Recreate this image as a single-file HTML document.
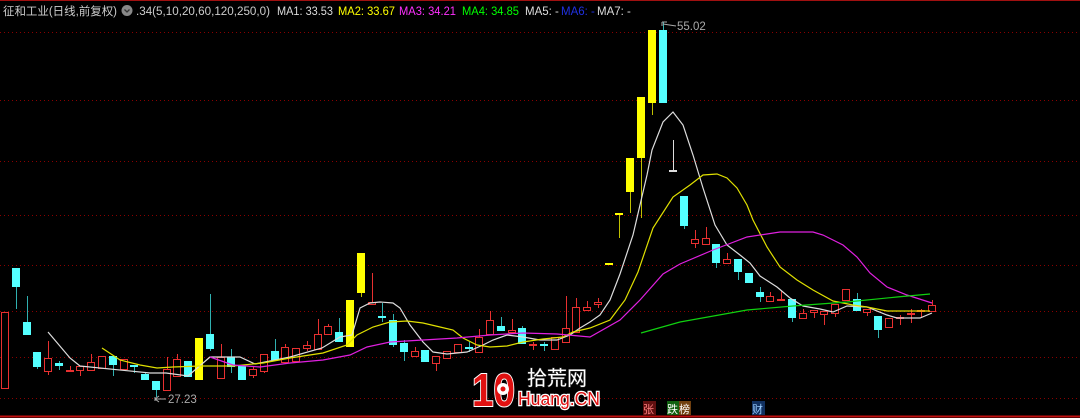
<!DOCTYPE html>
<html><head><meta charset="utf-8"><style>
html,body{margin:0;padding:0;background:#000;width:1080px;height:418px;overflow:hidden}
svg{display:block}
</style></head><body>
<svg id="s" width="1080" height="418" xmlns="http://www.w3.org/2000/svg" font-family="Liberation Sans, Noto Sans CJK SC, sans-serif">
<rect width="1080" height="418" fill="#000"/>
<line x1="0" y1="0.5" x2="1080" y2="0.5" stroke="#a01010"/>
<line x1="0" y1="416.5" x2="1080" y2="416.5" stroke="#c01010" stroke-width="2"/>
<g stroke="#8a0000" stroke-dasharray="1,3">
<line x1="0" y1="32.5" x2="1080" y2="32.5"/><line x1="0" y1="100.5" x2="1080" y2="100.5"/>
<line x1="0" y1="161.5" x2="1080" y2="161.5"/><line x1="0" y1="215.5" x2="1080" y2="215.5"/>
<line x1="0" y1="265.5" x2="1080" y2="265.5"/><line x1="0" y1="311.5" x2="1080" y2="311.5"/>
<line x1="0" y1="357.5" x2="1080" y2="357.5"/><line x1="0" y1="398.5" x2="1080" y2="398.5"/>
</g>
<g id="c"></g>
<g fill="none" stroke-width="1.2">
<polyline stroke="#ddd" points="48,332 70,358 80,366 150,373 166,373 188,376 210,357 240,357 255,364 290,357 322,348 340,337 352,335 360,308 370,303 380,302 393,303 400,308 410,325 423,342 433,352 447,354 467,352 483,345 493,340 507,335 523,337 540,340 557,340 570,335 580,328 590,322 600,315 610,300 620,274 633,235 647,175 652,150 663,122 673,112 683,125 693,155 703,188 715,225 727,245 740,255 750,263 760,276 777,287 790,298 803,306 820,309 833,312 847,306 867,307 887,315 897,318 920,318 932,313"/>
<polyline stroke="#e0e000" points="102,348 120,360 140,365 157,368 173,367 200,366 233,366 263,363 290,358 323,353 347,345 357,335 373,327 390,322 407,321 423,323 440,327 453,330 463,338 477,345 490,347 507,346 523,342 543,339 563,337 573,332 590,328 610,320 625,300 638,272 653,228 673,197 690,185 703,175 717,174 727,178 737,188 747,205 753,220 767,247 780,267 797,280 813,290 833,301 853,305 867,307 887,311 913,311 930,311"/>
<polyline stroke="#e020e0" points="210,357 233,365 260,367 290,363 323,360 350,355 367,347 390,342 423,340 457,338 490,335 523,333 557,334 590,337 620,320 640,300 663,274 680,264 713,250 747,237 780,232 813,232 823,235 843,245 857,257 870,273 887,287 907,295 932,303"/>
<polyline stroke="#10d010" points="641,333 680,322 747,310 793,306 847,302 897,297 930,294"/>
</g>
<g font-size="11.5" fill="#ddd">
<text x="3" y="15" fill="#ccc" textLength="114" lengthAdjust="spacingAndGlyphs">征和工业(日线,前复权)</text>
<circle cx="127" cy="10.5" r="5.5" fill="#888"/><path d="M124.5 9.5 L127 12 L129.5 9.5" stroke="#333" fill="none" stroke-width="1.3"/>
<text x="136" y="15" fill="#ccc" textLength="134" lengthAdjust="spacingAndGlyphs">.34(5,10,20,60,120,250,0)</text>
<text x="277" y="15" textLength="56" lengthAdjust="spacingAndGlyphs">MA1: 33.53</text>
<text x="338" y="15" fill="#ffff00" textLength="57" lengthAdjust="spacingAndGlyphs">MA2: 33.67</text>
<text x="399" y="15" fill="#ff30ff" textLength="57" lengthAdjust="spacingAndGlyphs">MA3: 34.21</text>
<text x="462" y="15" fill="#00ff00" textLength="57" lengthAdjust="spacingAndGlyphs">MA4: 34.85</text>
<text x="525" y="15">MA5: -</text>
<text x="561" y="15" fill="#2030e0">MA6: -</text>
<text x="597" y="15">MA7: -</text>
<text x="677" y="30" fill="#aaa">55.02</text>
<text x="168" y="403" fill="#aaa">27.23</text>
</g>
<path d="M662 22 V26 M662 22 H667 M663 24 L676 26" stroke="#aaa" fill="none"/>
<path d="M155 397 V401 M155 399 H166 M155 399 L159 396 M155 399 L159 402" stroke="#aaa" fill="none"/>
<g>
<text x="472" y="406" font-size="46" font-weight="bold" fill="#e01010" stroke="#fff" stroke-width="2" paint-order="stroke" font-family="Liberation Sans, sans-serif" textLength="43" lengthAdjust="spacingAndGlyphs">10</text>
<circle cx="503" cy="389" r="6" fill="#fff"/><circle cx="503" cy="389" r="2.5" fill="#e01010"/>
<text x="527" y="385" font-size="20" fill="#fff" stroke="#333" stroke-width="1" paint-order="stroke" font-family="Noto Sans CJK SC, sans-serif">拾荒网</text>
<text x="518" y="405" font-size="18" fill="#e01010" stroke="#fff" stroke-width="2.5" paint-order="stroke" font-family="Liberation Sans, sans-serif" textLength="82" lengthAdjust="spacingAndGlyphs">Huang.CN</text>
</g>
<g font-size="11" font-family="Noto Sans CJK SC, sans-serif">
<rect x="643" y="401" width="13" height="14" fill="#601010"/><text x="643" y="413" fill="#ff8080">张</text>
<rect x="667" y="401" width="12" height="14" fill="#106010"/><text x="667" y="413" fill="#fff">跌</text>
<rect x="679" y="401" width="12" height="14" fill="#704010"/><text x="679" y="413" fill="#fff">榜</text>
<rect x="752" y="401" width="13" height="14" fill="#103060"/><text x="752" y="413" fill="#9cf">财</text>
</g>
</svg>
<script>
var d=[
[0,'r',312,389,312,389],[1,'c',268,287,268,309],[2,'c',322,335,296,335],[3,'c',352,367,352,369],[4,'r',358,372,341,375],
[5,'c',363,366,361,370],[6,'r',370,372,366,372],[7,'r',366,371,366,376],[8,'r',362,371,354,371],[9,'r',356,369,356,369],
[10,'c',356,365,356,376],[11,'r',359,370,359,370],[12,'c',365,367,365,373],[13,'c',374,380,372,380],[14,'c',381,390,381,397],
[15,'r',369,391,357,391],[16,'r',359,377,354,377],[17,'c',361,377,361,377],[18,'y',338,380,338,380],[19,'c',334,349,294,351],
[20,'r',357,379,344,379],[21,'c',357,367,349,373],[22,'c',366,380,366,380],[23,'r',369,376,366,378],[24,'r',354,372,354,373],
[25,'c',351,360,339,360],[26,'r',347,363,344,363],[27,'r',348,362,348,362],[28,'r',345,349,341,351],[29,'r',334,350,319,350],
[30,'r',326,335,324,335],[31,'c',332,342,318,342],[32,'y',300,347,300,347],[33,'y',253,293,253,297],[34,'r',302,305,273,305],
[35,'c',316,317,303,322],[36,'c',320,345,314,347],[37,'c',343,352,340,361],[38,'r',351,357,347,357],[39,'c',350,362,350,362],
[40,'r',356,364,356,371],[41,'r',351,359,351,359],[42,'r',344,353,344,353],[43,'c',347,349,342,352],[44,'r',337,353,329,353],
[45,'r',320,335,311,335],[46,'c',326,331,317,331],[47,'r',330,333,319,333],[48,'c',328,344,326,344],[49,'r',344,346,342,350],
[50,'c',344,346,342,351],[51,'r',337,350,337,350],[52,'r',328,343,296,343],[53,'r',307,333,298,333],[54,'r',307,311,301,311],
[55,'r',302,305,298,308],[56,'y',263,265,263,265],[57,'y',213,215,213,238],[58,'y',158,192,158,213],[59,'y',97,158,97,218],
[60,'y',30,103,30,115],[61,'c',30,103,22,103],[62,'w',170,172,140,172],[63,'c',196,226,196,229],[64,'r',239,244,230,248],
[65,'r',238,245,227,245],[66,'c',244,263,244,268],[67,'r',259,264,253,264],[68,'c',259,272,259,280],[69,'c',273,283,273,283],
[70,'c',292,297,287,302],[71,'r',296,302,292,302],[72,'r',299,301,291,301],[73,'c',299,318,299,322],[74,'r',313,319,309,319],
[75,'r',310,313,310,318],[76,'r',311,315,311,325],[77,'r',304,314,304,317],[78,'r',289,301,289,301],[79,'c',299,311,293,311],
[80,'r',309,313,309,316],[81,'c',316,330,316,338],[82,'r',318,328,318,328],[83,'r',317,319,315,325],[84,'r',313,315,309,323],
[85,'r',310,312,309,317],[86,'r',305,312,300,312]];
var g=document.getElementById('c'),h='';
d.forEach(function(a){var x=Math.round(5+10.78*a[0]),t=a[1],top=a[2],bot=a[3];var l=x-4,w=8,hh=Math.max(bot-top,1);
var col=t=='r'?'#e83030':t=='c'?'#54ffff':t=='y'?'#ffff00':'#ddd';var wc=t=='c'?'#30b0b0':t=='y'?'#c0c000':col;
h+='<line x1="'+(x+.5)+'" y1="'+a[4]+'" x2="'+(x+.5)+'" y2="'+a[5]+'" stroke="'+wc+'"/>';
if(t=='r')h+='<rect x="'+(l+.5)+'" y="'+(top+.5)+'" width="'+(w-1)+'" height="'+Math.max(hh-1,1)+'" fill="#000" stroke="'+col+'"/>';
else h+='<rect x="'+l+'" y="'+top+'" width="'+w+'" height="'+Math.max(hh,2)+'" fill="'+col+'"/>';});
g.innerHTML=h;
</script>
</body></html>
